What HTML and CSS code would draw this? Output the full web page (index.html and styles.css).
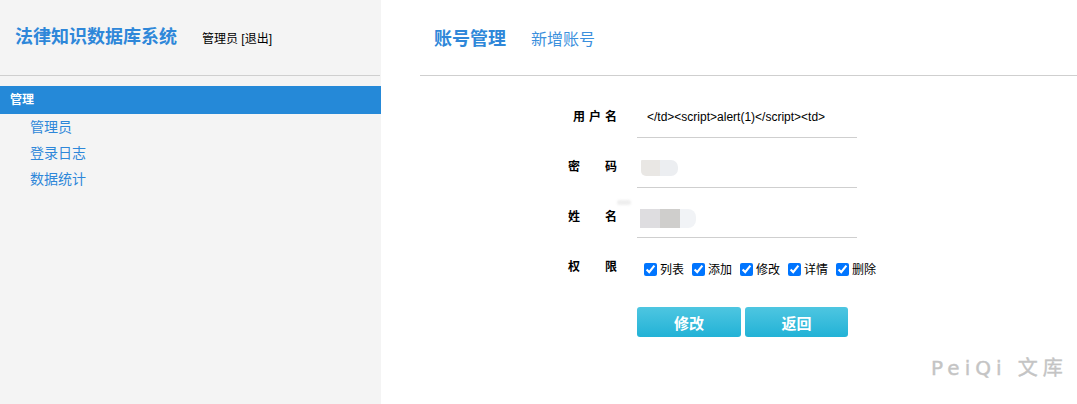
FILE: index.html
```html
<!DOCTYPE html>
<html lang="zh">
<head>
<meta charset="utf-8">
<title>账号管理</title>
<link rel="stylesheet" href="styles.css">
</head>
<body>
<div class="page">
  <aside class="sidebar">
    <div class="side-head">
      <h1 class="brand">法律知识数据库系统</h1>
      <span class="user">管理员 [退出]</span>
    </div>
    <div class="nav-group">管理</div>
    <ul class="nav-list">
      <li>管理员</li>
      <li>登录日志</li>
      <li>数据统计</li>
    </ul>
  </aside>
  <main class="main">
    <div class="main-head">
      <span class="tab active">账号管理</span>
      <span class="tab">新增账号</span>
    </div>
    <div class="form">
      <div class="row">
        <div class="label l3"><span>用</span><span>户</span><span>名</span></div>
        <div class="field line"><span class="val">&lt;/td&gt;&lt;script&gt;alert(1)&lt;/script&gt;&lt;td&gt;</span></div>
      </div>
      <div class="row">
        <div class="label"><span>密</span><span>码</span></div>
        <div class="field line"><span class="blob b1"><i class="p1"></i><i class="p2"></i></span></div>
      </div>
      <div class="row">
        <div class="label"><span>姓</span><span>名</span></div>
        <div class="field line"><span class="smudge"></span><span class="blob b2"><i class="q1"></i><i class="q2"></i><i class="q3"></i></span></div>
      </div>
      <div class="row">
        <div class="label"><span>权</span><span>限</span></div>
        <div class="field perms">
          <label class="perm"><input type="checkbox" checked>列表</label>
          <label class="perm"><input type="checkbox" checked>添加</label>
          <label class="perm"><input type="checkbox" checked>修改</label>
          <label class="perm"><input type="checkbox" checked>详情</label>
          <label class="perm"><input type="checkbox" checked>删除</label>
        </div>
      </div>
      <div class="buttons">
        <button class="btn">修改</button>
        <button class="btn">返回</button>
      </div>
    </div>
  </main>
</div>
<div class="watermark">PeiQi 文库</div>
</body>
</html>
```

FILE: styles.css
```css
* { box-sizing: border-box; }
html, body { margin: 0; padding: 0; background: #fff; }
body {
  font-family: "Liberation Sans", "Noto Sans CJK SC", sans-serif;
  font-size: 12px;
  color: #000;
  width: 1077px;
  height: 404px;
  overflow: hidden;
  position: relative;
}
.page { display: flex; height: 404px; }
.sidebar {
  width: 381px;
  flex: none;
  background: #f4f4f4;
  height: 100%;
}
.side-head {
  height: 76px;
  border-bottom: 1px solid #cfcfcf;
  display: flex;
  align-items: center;
  padding: 0 0 0 16px;
  margin-right: 1px;
}
.brand {
  margin: 0;
  font-size: 18px;
  font-weight: bold;
  color: #2e87d9;
  line-height: 22px;
  margin-top: -1px;
  margin-left: -1px;
}
.user {
  margin-left: 25px;
  font-size: 12px;
  color: #000;
  margin-top: -1px;
}
.nav-group {
  margin-top: 10px;
  height: 28px;
  line-height: 28px;
  background: #2589d8;
  color: #fff;
  font-weight: bold;
  font-size: 12px;
  padding-left: 10px;
}
.nav-list {
  list-style: none;
  margin: 0;
  padding: 0 0 0 30px;
}
.nav-list li {
  line-height: 26px;
  font-size: 14px;
  color: #2e87d9;
}
.main { flex: 1; padding-left: 39px; }
.main-head {
  height: 76px;
  border-bottom: 1px solid #cfcfcf;
  display: flex;
  align-items: center;
  padding-left: 14px;
}
.tab {
  font-size: 16px;
  color: #3b90dd;
  margin-right: 25px;
  margin-top: 1px;
}
.tab.active {
  font-size: 18px;
  font-weight: bold;
  color: #2e87d9;
  margin-top: -1px;
}
.form { padding-top: 12px; }
.row { display: flex; height: 50px; }
.label {
  width: 49px;
  margin-left: 148px;
  display: flex;
  justify-content: space-between;
  font-weight: bold;
  font-size: 12px;
  padding-top: 20px;
  line-height: 18px;
}
.label.l3 { padding-left: 5px; }
.field {
  width: 220px;
  margin-left: 20px;
  padding-top: 20px;
  line-height: 18px;
  position: relative;
}
.field.line { border-bottom: 1px solid #cfcfcf; }
.val { padding-left: 10px; font-size: 12px; }
.blob { position: absolute; display: flex; filter: blur(0.6px); }
.blob i { display: block; height: 100%; }
.b1 { left: 4px; top: 22px; height: 16px; }
.p1 { width: 19px; background: #e9e7e4; border-radius: 1px 0 0 5px; }
.p2 { width: 18px; background: #eceef1; border-radius: 0 7px 7px 0; }
.b2 { left: 3px; top: 21px; height: 19px; }
.q1 { width: 20px; background: #dedde0; }
.q2 { width: 20px; background: #cfcecc; }
.q3 { width: 16px; background: #f1f3f6; border-radius: 0 8px 8px 0; }
.smudge { position: absolute; left: -20px; top: 12px; width: 14px; height: 5px; background: #eeeeee; border-radius: 3px; filter: blur(1px); }
.perms {
  display: flex;
  padding-left: 7px;
  padding-top: 23px;
  align-items: flex-start;
  gap: 8px;
}
.perm {
  display: flex;
  align-items: center;
  width: 40px;
  font-size: 12px;
  white-space: nowrap;
  font-family: "Noto Sans CJK SC", sans-serif;
  line-height: 16px;
}
.perm input { margin: 0 3px 0 0; width: 13px; height: 13px; }
.buttons {
  margin-left: 217px;
  margin-top: 19px;
  display: flex;
  gap: 4px;
}
.btn {
  width: 104px;
  height: 30px;
  border: none;
  border-radius: 3px;
  background: linear-gradient(#4ec6e1, #22b2d6);
  color: #fff;
  font-weight: bold;
  font-size: 15px;
  font-family: "Noto Sans CJK SC", sans-serif;
  padding: 0;
}
.btn + .btn { width: 103px; }
.watermark {
  position: absolute;
  left: 931px;
  top: 352px;
  font-size: 20px;
  letter-spacing: 5px;
  color: #c4c4c4;
  font-family: "DejaVu Sans", "Noto Sans CJK SC", sans-serif;
  -webkit-text-stroke: 0.4px #c4c4c4;
  white-space: nowrap;
}
```
